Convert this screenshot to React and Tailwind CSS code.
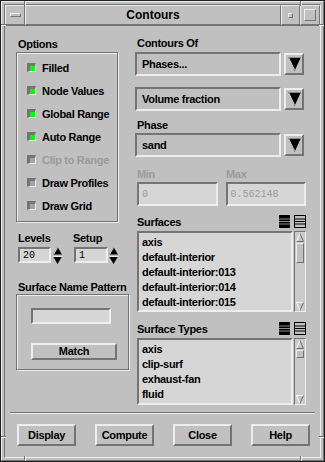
import React from "react"

// Motif-ish bevel colours
const up = "border-t-[#ededed] border-l-[#ededed] border-b-[#747474] border-r-[#747474]"
const down = "border-t-[#747474] border-l-[#747474] border-b-[#ededed] border-r-[#ededed]"
const etched = "border border-[#747474] shadow-[inset_1px_1px_0_#ededed,1px_1px_0_#ededed]"
const bold = "text-[11px] font-bold tracking-[-0.3px]"

const Label = ({ children, className = "" }) => (
  <div className={`h-[12px] leading-[12px] ${bold} whitespace-nowrap ${className}`}>{children}</div>
)

const Check = ({ label, on, disabled }) => (
  <div className="h-[23px] flex items-center pl-[10px] gap-[6px]">
    <span
      className={`w-[9px] h-[9px] border-l-[3px] border-t-[3px] border-r border-b ${down} ${
        on ? "bg-[#00ff00]" : "bg-[#a3a3a3]"
      }`}
    />
    <span className={`${bold} leading-[12px] ${disabled ? "text-[#9a9a9a]" : "text-black"}`}>{label}</span>
  </div>
)

const DownArrow = () => (
  <svg width="13" height="14" viewBox="0 0 13 14">
    <polygon points="0,0 13,0 6.5,14" fill="#000" />
    <line x1="0.5" y1="0.5" x2="6.5" y2="13" stroke="#e8e8e8" strokeWidth="1" />
    <line x1="0" y1="0.5" x2="13" y2="0.5" stroke="#8a8a8a" strokeWidth="1" />
  </svg>
)

const Spinner = () => (
  <svg width="9" height="17" viewBox="0 0 9 17">
    <polygon points="4.5,0 9,7.5 0,7.5" fill="#000" />
    <line x1="0.5" y1="7.5" x2="4.5" y2="0.5" stroke="#e8e8e8" strokeWidth="1" />
    <polygon points="0,9.5 9,9.5 4.5,17" fill="#000" />
    <line x1="0" y1="9.5" x2="9" y2="9.5" stroke="#e8e8e8" strokeWidth="1" />
  </svg>
)

const Drop = ({ text }) => (
  <div className="flex items-center h-[24px]">
    <div className={`w-[146px] h-full border-2 ${down} flex items-center pl-[5px] ${bold}`}>{text}</div>
    <div className={`ml-[3px] w-[20px] h-[22px] border-2 ${up} flex items-center justify-center`}>
      <DownArrow />
    </div>
  </div>
)

const ScrollArrow = ({ dir }) => (
  <div className="h-[10px] flex items-center justify-center">
    <svg width="8" height="9" viewBox="0 0 8 9">
      {dir === "up" ? (
        <>
          <polygon points="4,0.5 7.5,8.5 0.5,8.5" fill="#c4c4c4" />
          <line x1="0.5" y1="8.5" x2="4" y2="0.5" stroke="#fff" strokeWidth="1" />
          <polyline points="4,0.5 7.5,8.5 0.5,8.5" fill="none" stroke="#6e6e6e" strokeWidth="1" />
        </>
      ) : (
        <>
          <polygon points="0.5,0.5 7.5,0.5 4,8.5" fill="#c4c4c4" />
          <polyline points="4,8.5 0.5,0.5 7.5,0.5" fill="none" stroke="#fff" strokeWidth="1" />
          <line x1="7.5" y1="0.5" x2="4" y2="8.5" stroke="#6e6e6e" strokeWidth="1" />
        </>
      )}
    </svg>
  </div>
)

const ListIcons = () => (
  <div className="flex gap-[4px]">
    <svg width="11" height="13" viewBox="0 0 11 13">
      <rect x="0" y="0" width="11" height="13" fill="#000" />
      <line x1="0" y1="4" x2="11" y2="4" stroke="#8a8a8a" />
      <line x1="0" y1="6.5" x2="11" y2="6.5" stroke="#8a8a8a" />
      <line x1="0" y1="9" x2="11" y2="9" stroke="#8a8a8a" />
    </svg>
    <svg width="12" height="13" viewBox="0 0 12 13">
      <rect x="0.5" y="0.5" width="11" height="12" fill="#c0c0c0" stroke="#000" />
      <line x1="0" y1="4" x2="12" y2="4" stroke="#000" />
      <line x1="0" y1="6.5" x2="12" y2="6.5" stroke="#000" />
      <line x1="0" y1="9" x2="12" y2="9" stroke="#000" />
    </svg>
  </div>
)

const ListBox = ({ items, height, thumbH }) => (
  <div className="flex gap-[1px]" style={{ height }}>
    <div className={`w-[157px] h-full border-2 ${down} bg-[#d6d6d6] pl-[3px] pt-[2px] overflow-hidden`}>
      {items.map((it) => (
        <div key={it} className={`h-[15px] leading-[15px] ${bold} whitespace-nowrap`}>
          {it}
        </div>
      ))}
    </div>
    <div className={`w-[12px] h-full border ${down} bg-[#cbcbcb] flex flex-col`}>
      <ScrollArrow dir="up" />
      <div className="flex-1 px-[1px]">
        <div className={`mt-[1px] border ${up} bg-[#c0c0c0]`} style={{ height: thumbH }} />
      </div>
      <ScrollArrow dir="down" />
    </div>
  </div>
)

const Button = ({ children, className = "" }) => (
  <div className={`border-2 ${up} bg-[#c0c0c0] flex items-center justify-center ${bold} ${className}`}>
    {children}
  </div>
)

const Field = ({ value, w, h, disabled }) => (
  <div
    className={`border-2 ${down} bg-[#d6d6d6] flex items-center pl-[3px] font-['Liberation_Mono',monospace] text-[10px] ${
      disabled ? "text-[#9a9a9a]" : "text-black"
    }`}
    style={{ width: w, height: h }}
  >
    {value}
  </div>
)

export default function App() {
  return (
    <div className="relative w-[325px] h-[462px] bg-[#c0c0c0] border border-[#1e1e1e] font-['Liberation_Sans',Arial,sans-serif] text-black overflow-hidden">
      {/* frame corner separators */}
      <div className="absolute left-[23px] top-0 w-[2px] h-[5px] border-l border-l-[#747474] border-r border-r-[#ededed]" />
      <div className="absolute left-[299px] top-0 w-[2px] h-[5px] border-l border-l-[#747474] border-r border-r-[#ededed]" />
      <div className="absolute left-[23px] bottom-0 w-[2px] h-[5px] border-l border-l-[#747474] border-r border-r-[#ededed]" />
      <div className="absolute left-[299px] bottom-0 w-[2px] h-[5px] border-l border-l-[#747474] border-r border-r-[#ededed]" />
      <div className="absolute left-0 top-[23px] w-[5px] h-[2px] border-t border-t-[#747474] border-b border-b-[#ededed]" />
      <div className="absolute right-0 top-[23px] w-[5px] h-[2px] border-t border-t-[#747474] border-b border-b-[#ededed]" />
      <div className="absolute left-0 bottom-[23px] w-[5px] h-[2px] border-t border-t-[#747474] border-b border-b-[#ededed]" />
      <div className="absolute right-0 bottom-[23px] w-[5px] h-[2px] border-t border-t-[#747474] border-b border-b-[#ededed]" />

      <div className={`h-full border ${up} p-[2px]`}>
        <div className={`h-full border ${down} flex flex-col`}>
          {/* title bar */}
          <div className="flex h-[20px] shrink-0">
            <div className={`w-[20px] h-full border ${up} flex items-center justify-center`}>
              <div className={`w-[11px] h-[4px] border ${up}`} />
            </div>
            <div className={`flex-1 h-full border ${up} flex items-center justify-center text-[12px] font-bold`}>
              Contours
            </div>
            <div className={`w-[19px] h-full border ${up} flex items-center justify-center`}>
              <div className={`w-[5px] h-[5px] border ${up}`} />
            </div>
            <div className={`w-[20px] h-full border ${up} flex items-center justify-center`}>
              <div className={`w-[12px] h-[12px] border ${up}`} />
            </div>
          </div>
          <div className="h-[1px] bg-[#747474] shrink-0" />

          {/* body */}
          <div className="flex pl-[11px] pt-[11px]">
            {/* left column */}
            <div className="w-[119px] pt-[1px] flex flex-col">
              <Label className="ml-[2px]">Options</Label>
              <div className={`mt-[2px] w-[102px] h-[170px] ${etched} pt-[3px]`}>
                <Check label="Filled" on />
                <Check label="Node Values" on />
                <Check label="Global Range" on />
                <Check label="Auto Range" on />
                <Check label="Clip to Range" disabled />
                <Check label="Draw Profiles" />
                <Check label="Draw Grid" />
              </div>

              <div className="mt-[10px] flex ml-[2px]">
                <Label className="w-[55px]">Levels</Label>
                <Label>Setup</Label>
              </div>
              <div className="mt-[3px] flex items-center ml-[2px] h-[16px]">
                <Field value="20" w={33} h={16} />
                <div className="ml-[2px]">
                  <Spinner />
                </div>
                <div className="ml-[12px]">
                  <Field value="1" w={34} h={16} />
                </div>
                <div className="ml-[1px]">
                  <Spinner />
                </div>
              </div>

              <Label className="mt-[18px] ml-[2px]">Surface Name Pattern</Label>
              <div className={`mt-[1px] w-[113px] h-[76px] ${etched} pl-[14px] pt-[13px]`}>
                <Field value="" w={80} h={16} />
                <Button className="mt-[19px] w-[86px] h-[17px]">Match</Button>
              </div>
            </div>

            {/* right column */}
            <div className="w-[171px] flex flex-col">
              <Label className="ml-[2px]">Contours Of</Label>
              <div className="mt-[3px]">
                <Drop text="Phases..." />
              </div>
              <div className="mt-[11px]">
                <Drop text="Volume fraction" />
              </div>
              <Label className="mt-[8px] ml-[2px]">Phase</Label>
              <div className="mt-[2px]">
                <Drop text="sand" />
              </div>

              <div className="mt-[11px] ml-[2px] flex">
                <Label className="w-[89px] text-[#9a9a9a]">Min</Label>
                <Label className="text-[#9a9a9a]">Max</Label>
              </div>
              <div className="mt-[2px] ml-[2px] flex gap-[8px]">
                <Field value="0" w={81} h={24} disabled />
                <Field value="0.562148" w={81} h={24} disabled />
              </div>

              <div className="mt-[9px] ml-[2px] w-[169px] h-[13px] flex justify-between items-start">
                <Label className="mt-[1px]">Surfaces</Label>
                <ListIcons />
              </div>
              <div className="mt-[3px] ml-[2px]">
                <ListBox
                  height={81}
                  thumbH={20}
                  items={[
                    "axis",
                    "default-interior",
                    "default-interior:013",
                    "default-interior:014",
                    "default-interior:015",
                  ]}
                />
              </div>

              <div className="mt-[10px] ml-[2px] w-[169px] h-[13px] flex justify-between items-start">
                <Label className="mt-[1px]">Surface Types</Label>
                <ListIcons />
              </div>
              <div className="mt-[3px] ml-[2px]">
                <ListBox height={67} thumbH={8} items={["axis", "clip-surf", "exhaust-fan", "fluid"]} />
              </div>
            </div>
          </div>

          {/* separator */}
          <div className="mt-[7px] mx-[5px] h-[2px] border-t border-t-[#747474] border-b border-b-[#ededed]" />

          {/* buttons */}
          <div className="mt-[10px] pl-[12px] flex gap-[19px]">
            <Button className="w-[59px] h-[22px]">Display</Button>
            <Button className="w-[59px] h-[22px]">Compute</Button>
            <Button className="w-[59px] h-[22px]">Close</Button>
            <Button className="w-[59px] h-[22px]">Help</Button>
          </div>
        </div>
      </div>
    </div>
  )
}
